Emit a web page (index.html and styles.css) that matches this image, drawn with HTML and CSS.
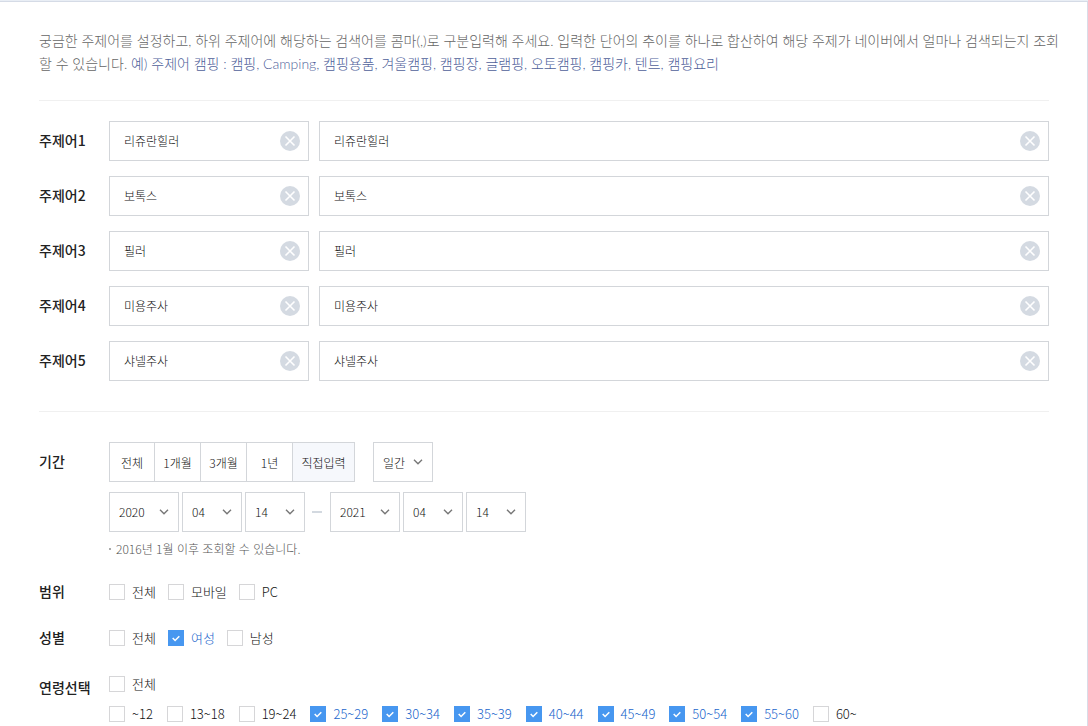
FILE: index.html
```html
<!DOCTYPE html>
<html lang="ko">
<head>
    <meta charset="UTF-8">
    <meta name="viewport" content="width=device-width, initial-scale=1.0">
    <title>검색어트렌드</title>
    <link rel="stylesheet" href="styles.css">
</head>
<body>
    <svg class="defs" aria-hidden="true">
        <symbol id="clear" viewBox="0 0 20 20">
            <circle cx="10" cy="10" r="10" fill="#d4dae2"/>
            <path d="M5.5 5.5l9 9M14.5 5.5l-9 9" stroke="#fff" stroke-width="1.6" fill="none"/>
        </symbol>
    </svg>

    <form class="panel">
        <p class="guide">궁금한 주제어를 설정하고, 하위 주제어에 해당하는 검색어를 콤마(,)로 구분입력해 주세요. 입력한 단어의 추이를 하나로 합산하여 해당 주제가 네이버에서 얼마나 검색되는지 조회<br>할 수 있습니다. <span class="sample">예) 주제어 캠핑 : 캠핑, Camping, 캠핑용품, 겨울캠핑, 캠핑장, 글램핑, 오토캠핑, 캠핑카, 텐트, 캠핑요리</span></p>

        <div class="keywords">
            <div class="row">
                <label class="title" for="topic1">주제어1</label>
                <div class="field topic"><input type="text" id="topic1" value="리쥬란힐러"><button type="button" class="clear" aria-label="삭제"><svg><use href="#clear"/></svg></button></div>
                <div class="field words"><input type="text" aria-label="주제어1 검색어" value="리쥬란힐러"><button type="button" class="clear" aria-label="삭제"><svg><use href="#clear"/></svg></button></div>
            </div>
            <div class="row">
                <label class="title" for="topic2">주제어2</label>
                <div class="field topic"><input type="text" id="topic2" value="보톡스"><button type="button" class="clear" aria-label="삭제"><svg><use href="#clear"/></svg></button></div>
                <div class="field words"><input type="text" aria-label="주제어2 검색어" value="보톡스"><button type="button" class="clear" aria-label="삭제"><svg><use href="#clear"/></svg></button></div>
            </div>
            <div class="row">
                <label class="title" for="topic3">주제어3</label>
                <div class="field topic"><input type="text" id="topic3" value="필러"><button type="button" class="clear" aria-label="삭제"><svg><use href="#clear"/></svg></button></div>
                <div class="field words"><input type="text" aria-label="주제어3 검색어" value="필러"><button type="button" class="clear" aria-label="삭제"><svg><use href="#clear"/></svg></button></div>
            </div>
            <div class="row">
                <label class="title" for="topic4">주제어4</label>
                <div class="field topic"><input type="text" id="topic4" value="미용주사"><button type="button" class="clear" aria-label="삭제"><svg><use href="#clear"/></svg></button></div>
                <div class="field words"><input type="text" aria-label="주제어4 검색어" value="미용주사"><button type="button" class="clear" aria-label="삭제"><svg><use href="#clear"/></svg></button></div>
            </div>
            <div class="row">
                <label class="title" for="topic5">주제어5</label>
                <div class="field topic"><input type="text" id="topic5" value="샤넬주사"><button type="button" class="clear" aria-label="삭제"><svg><use href="#clear"/></svg></button></div>
                <div class="field words"><input type="text" aria-label="주제어5 검색어" value="샤넬주사"><button type="button" class="clear" aria-label="삭제"><svg><use href="#clear"/></svg></button></div>
            </div>
        </div>

        <div class="row period">
            <div class="title">기간</div>
            <div class="content">
                <div class="line">
                    <div class="tabs">
                        <button type="button">전체</button>
                        <button type="button">1개월</button>
                        <button type="button">3개월</button>
                        <button type="button">1년</button>
                        <button type="button" class="on">직접입력</button>
                    </div>
                    <select class="unit" aria-label="단위"><option>일간</option></select>
                </div>
                <div class="line dates">
                    <select class="year" aria-label="시작 연도"><option>2020</option></select>
                    <select aria-label="시작 월"><option>04</option></select>
                    <select aria-label="시작 일"><option>14</option></select>
                    <span class="dash"></span>
                    <select class="year" aria-label="종료 연도"><option>2021</option></select>
                    <select aria-label="종료 월"><option>04</option></select>
                    <select aria-label="종료 일"><option>14</option></select>
                </div>
                <p class="note">2016년 1월 이후 조회할 수 있습니다.</p>
            </div>
        </div>

        <div class="row option">
            <div class="title">범위</div>
            <div class="checks">
                <label><input type="checkbox"><span>전체</span></label>
                <label><input type="checkbox"><span>모바일</span></label>
                <label><input type="checkbox"><span>PC</span></label>
            </div>
        </div>

        <div class="row option">
            <div class="title">성별</div>
            <div class="checks">
                <label><input type="checkbox"><span>전체</span></label>
                <label><input type="checkbox" checked><span>여성</span></label>
                <label><input type="checkbox"><span>남성</span></label>
            </div>
        </div>

        <div class="row option ages">
            <div class="title">연령선택</div>
            <div class="content">
                <div class="checks">
                    <label><input type="checkbox"><span>전체</span></label>
                </div>
                <div class="checks">
                    <label><input type="checkbox"><span>~12</span></label>
                    <label><input type="checkbox"><span>13~18</span></label>
                    <label><input type="checkbox"><span>19~24</span></label>
                    <label><input type="checkbox" checked><span>25~29</span></label>
                    <label><input type="checkbox" checked><span>30~34</span></label>
                    <label><input type="checkbox" checked><span>35~39</span></label>
                    <label><input type="checkbox" checked><span>40~44</span></label>
                    <label><input type="checkbox" checked><span>45~49</span></label>
                    <label><input type="checkbox" checked><span>50~54</span></label>
                    <label><input type="checkbox" checked><span>55~60</span></label>
                    <label><input type="checkbox"><span>60~</span></label>
                </div>
            </div>
        </div>
    </form>
</body>
</html>
```

FILE: styles.css
```css
* {
    box-sizing: border-box;
}
body {
    margin: 0;
    border-top: 1px solid #e9eef5;
    background: #fff;
    color: #111;
    font-family: "Noto Sans CJK KR", sans-serif;
    font-size: 13px;
    font-weight: 300;
}
input, select, button {
    margin: 0;
    padding: 0;
    border: 0;
    background: none;
    color: inherit;
    font: inherit;
    outline: none;
}
button, select { cursor: pointer; }
.defs { display: none; }
.panel {
    min-height: calc(100vh - 1px);
    padding: 27px 38px 0 39px;
    border-top: 1px solid #d5dbe6;
    border-right: 1px solid #d9dce8;
}
.guide {
    margin: 0 -20px 0 0;
    padding-bottom: 25px;
    color: #666;
    font-family: Lato, "Noto Sans CJK KR", sans-serif;
    font-size: 14px;
    line-height: 23px;
}
.sample { color: #4f5f9a; }

/* keyword rows */
.keywords {
    display: flex;
    flex-direction: column;
    gap: 15px;
    padding: 20px 0 30px;
    border-top: 1px solid #f0f0f0;
    border-bottom: 1px solid #f0f0f0;
}
.row { display: flex; }
.title {
    flex: none;
    width: 70px;
    color: #222;
    font-size: 14px;
    font-weight: 500;
    line-height: 38px;
}
.field {
    display: flex;
    align-items: center;
    height: 40px;
    padding: 0 8px 0 14px;
    border: 1px solid #d3d6da;
}
.field input {
    flex: 1;
    min-width: 0;
    height: 38px;
    padding-bottom: 2px;
    font-size: 12px;
}
.topic {
    flex: none;
    width: 200px;
    margin-right: 10px;
}
.words { flex: 1; }
.clear {
    flex: none;
    width: 20px;
    height: 20px;
}
.clear svg {
    display: block;
    width: 20px;
    height: 20px;
}

/* period */
.period { padding-top: 30px; }
.content { flex: 1; }
.line {
    display: flex;
    align-items: center;
}
.tabs {
    display: flex;
    margin-right: 18px;
}
.tabs button {
    width: 47px;
    height: 40px;
    margin-right: -1px;
    border: 1px solid #d3d6da;
    font-size: 12px;
}
.tabs button:first-child { width: 46px; }
.tabs .on {
    width: 63px;
    margin-right: 0;
    background: #f6f8fc;
}
select {
    appearance: none;
    width: 60px;
    height: 40px;
    padding-left: 9px;
    border: 1px solid #d3d6da;
    border-radius: 0;
    background: url("data:image/svg+xml,%3Csvg xmlns='http://www.w3.org/2000/svg' width='10' height='6'%3E%3Cpath d='M1 .8l4 4 4-4' fill='none' stroke='%23777' stroke-width='1.4'/%3E%3C/svg%3E") no-repeat right 9px center;
    font-size: 12px;
}
.dates {
    gap: 3px;
    margin-top: 10px;
}
.dates select { padding-bottom: 2px; }
.dates .year { width: 70px; }
.dash {
    width: 10px;
    height: 2px;
    margin: 0 5px 0 4px;
    background: #d3d9e0;
}
.note {
    display: flex;
    align-items: center;
    gap: 5px;
    margin: 7px 0 0;
    color: #555;
    font-size: 12px;
    line-height: 20px;
}
.note::before {
    content: "";
    width: 2px;
    height: 2px;
    background: #aaa;
}

/* check options */
.option { padding-top: 24px; }
.period + .option { padding-top: 22px; }
.option .title { line-height: 20px; }
.checks {
    display: flex;
    gap: 12px;
}
.checks label {
    display: flex;
    align-items: center;
    gap: 7px;
    height: 22px;
    line-height: 22px;
    cursor: pointer;
}
.checks input {
    appearance: none;
    width: 16px;
    height: 16px;
    border: 1px solid #d6d6d8;
    background: #fff;
}
.checks input:checked {
    border-color: #4797f0;
    background: #4797f0 url("data:image/svg+xml,%3Csvg xmlns='http://www.w3.org/2000/svg' width='8' height='7'%3E%3Cpath d='M.7 3l2.4 2.5L7.3 1.2' fill='none' stroke='%23fff' stroke-width='1.5'/%3E%3C/svg%3E") no-repeat center;
}
.checks input:checked + span { color: #1a66cc; }
.ages .title { padding-top: 4px; }
.ages .checks + .checks {
    gap: 14px;
    margin-top: 8px;
}
```
